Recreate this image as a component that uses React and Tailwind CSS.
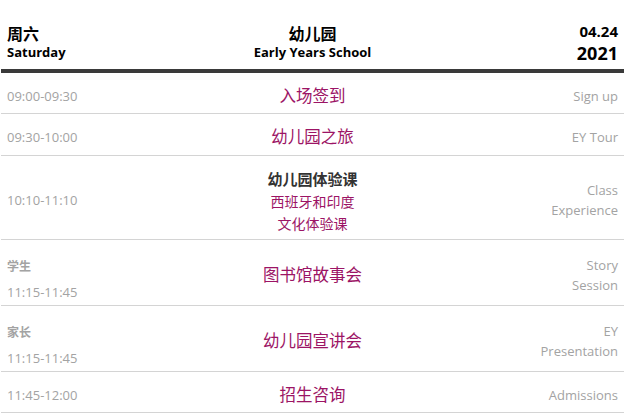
import React from 'react';

const rows = [
  { time: '09:00-09:30', title: '入场签到', en: ['Sign up'], h: 'h-[41px]' },
  { time: '09:30-10:00', title: '幼儿园之旅', en: ['EY Tour'], h: 'h-[42px]' },
  {
    time: '10:10-11:10',
    heading: '幼儿园体验课',
    lines: ['西班牙和印度', '文化体验课'],
    en: ['Class', 'Experience'],
    h: 'h-[84px]',
  },
  { who: '学生', time: '11:15-11:45', title: '图书馆故事会', en: ['Story', 'Session'], h: 'h-[66px]' },
  { who: '家长', time: '11:15-11:45', title: '幼儿园宣讲会', en: ['EY', 'Presentation'], h: 'h-[66px]' },
  { time: '11:45-12:00', title: '招生咨询', en: ['Admissions'], h: 'h-[41px]' },
];

const font = { fontFamily: '"Open Sans", "Noto Sans CJK SC", sans-serif' };

export default function App() {
  return (
    <div className="w-[633px] h-[414px] bg-white overflow-hidden pl-px" style={font}>
      <div className="w-[623px]">
        {/* header */}
        <div className="h-[73px] border-b-4 border-[#3a3a3a] px-[6px] pt-[24px] grid grid-cols-3 items-start text-black">
          <div>
            <div className="text-[16px] font-bold leading-[20px]">周六</div>
            <div className="text-[13px] font-bold leading-[16px]">Saturday</div>
          </div>
          <div className="text-center">
            <div className="text-[16px] font-bold leading-[20px]">幼儿园</div>
            <div className="text-[13px] font-bold leading-[16px] whitespace-nowrap">Early Years School</div>
          </div>
          <div className="text-right -mt-[3px]">
            <div className="text-[15px] font-bold leading-[20px]">04.24</div>
            <div className="text-[18px] font-bold leading-[24px]">2021</div>
          </div>
        </div>

        {rows.map((r, i) => (
          <div
            key={i}
            className={`${r.h} border-b border-[#d4d4d4] px-[6px] pt-[5px] grid grid-cols-3 items-center`}
          >
            <div className={`text-[#a3a3a3] text-[13px] ${r.who ? 'pt-[9px]' : ''}`}>
              {r.who && <div className="font-bold text-[12px] leading-[18px] mb-[7px]">{r.who}</div>}
              <div className="leading-[18px]">{r.time}</div>
            </div>
            <div className="text-center">
              {r.heading ? (
                <div className="pt-[2px]">
                  <div className="text-[15px] font-bold text-[#333] leading-[24px]">{r.heading}</div>
                  {r.lines.map((l) => (
                    <div key={l} className="text-[14px] text-[#9c1465] leading-[22px]">{l}</div>
                  ))}
                </div>
              ) : (
                <div className="text-[16.5px] text-[#9c1465] leading-[22px]">{r.title}</div>
              )}
            </div>
            <div className="text-right text-[13px] text-[#a3a3a3] leading-[20px]">
              {r.en.map((e) => (
                <div key={e}>{e}</div>
              ))}
            </div>
          </div>
        ))}
      </div>
    </div>
  );
}
